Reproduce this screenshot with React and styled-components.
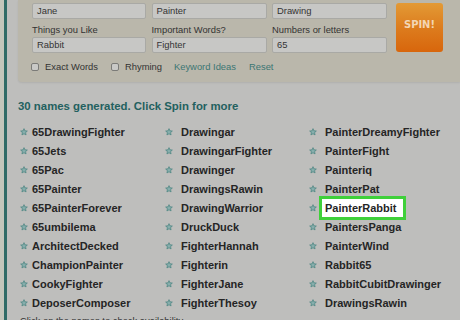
import React from 'react';
import styled, { createGlobalStyle } from 'styled-components';

const Global = createGlobalStyle`
  html, body { margin: 0; padding: 0; background: #bebebc; }
  body { font-family: "Liberation Sans", Arial, sans-serif; }
`;

const Frame = styled.div`
  width: 460px;
  height: 320px;
  overflow: hidden;
  display: flex;
  background: #bebebc;
`;

const Strip = styled.div`
  width: 4px;
  background: #c3c6bb;
`;

const Rule = styled.div`
  width: 3px;
  background: #2f6b66;
`;

const Main = styled.div`
  flex: 1;
  display: flex;
  flex-direction: column;
`;

const Panel = styled.div`
  margin-left: 11px;
  padding: 3px 0 10px 14px;
  background: #bab7ab;
  border-bottom-left-radius: 4px;
  box-shadow: 0 1px 2px rgba(0, 0, 0, 0.08);
`;

const FormRow = styled.div`
  display: flex;
`;

const FormGrid = styled.div`
  display: grid;
  grid-template-columns: 114px 115px 115px;
  grid-template-rows: 16px 18px 16px;
  column-gap: 5.5px;
`;

const Field = styled.div`
  box-sizing: border-box;
  background: #c7c7c5;
  border: 1px solid #a9a9a5;
  border-radius: 2px;
  padding-left: 4px;
  font-size: 9.4px;
  line-height: 14px;
  color: #343434;
`;

const Label = styled.div`
  align-self: end;
  margin-bottom: 2px;
  font-size: 9.4px;
  line-height: 11px;
  color: #333;
`;

const Spin = styled.div`
  margin-left: 9px;
  width: 47px;
  height: 49px;
  border-radius: 3px;
  background: linear-gradient(#e39a35, #dc7a1c 55%, #d8660c);
  display: flex;
  align-items: center;
  justify-content: center;
  color: #f3d6b4;
  font-family: "DejaVu Sans Condensed", "Liberation Sans Narrow", sans-serif;
  font-stretch: condensed;
  font-weight: bold;
  font-size: 11px;
  padding-bottom: 6px;
  box-sizing: border-box;
`;

const CheckRow = styled.div`
  display: flex;
  align-items: center;
  height: 11px;
  margin-top: 8px;
  margin-left: -1px;
  font-size: 9.4px;
  color: #333;
`;

const Box = styled.span`
  width: 8px;
  height: 8px;
  border: 1px solid #7b7b78;
  border-radius: 2px;
  background: #c9c9c7;
  box-sizing: border-box;
  margin-right: 6px;
`;

const Opt = styled.span`
  margin-right: ${p => p.$gap}px;
  color: ${p => (p.$link ? '#3a7673' : '#333')};
`;

const Heading = styled.div`
  margin: 17px 0 0 11px;
  font-size: 11.4px;
  line-height: 14px;
  font-weight: bold;
  color: #23615f;
`;

const List = styled.div`
  display: grid;
  grid-template-columns: 145px 144px 1fr;
  grid-auto-rows: 19px;
  margin: 9.5px 0 0 13px;
`;

const Item = styled.div`
  display: flex;
  align-items: center;
  font-size: 11px;
  font-weight: bold;
  color: #252525;
`;

const Star = styled.svg`
  width: 8px;
  height: 8px;
  flex: none;
  margin-right: ${p => (p.$tight ? 4 : 8)}px;
`;

const Name = styled.span`
  ${p =>
    p.$mark &&
    `
    background: #fff;
    border: 3px solid #3fd03a;
    padding: 1px 6px 0 3px;
    margin: -3px 0 -3px -6px;
    line-height: 17px;
  `}
`;

const Footer = styled.div`
  margin: 2px 0 0 13px;
  font-size: 9.4px;
  line-height: 11px;
  color: #333;
`;

const StarIcon = ({ tight }) => (
  <Star $tight={tight} viewBox="0 0 24 24">
    <path
      d="M12 2l2.9 6.6 7.1.6-5.4 4.7 1.6 7-6.2-3.7-6.2 3.7 1.6-7L2 9.2l7.1-.6z"
      fill="#86aeac"
      stroke="#4f8683"
      strokeWidth="2.4"
      strokeLinejoin="round"
    />
  </Star>
);

const columns = [
  ['65DrawingFighter', '65Jets', '65Pac', '65Painter', '65PainterForever', '65umbilema', 'ArchitectDecked', 'ChampionPainter', 'CookyFighter', 'DeposerComposer'],
  ['Drawingar', 'DrawingarFighter', 'Drawinger', 'DrawingsRawin', 'DrawingWarrior', 'DruckDuck', 'FighterHannah', 'Fighterin', 'FighterJane', 'FighterThesoy'],
  ['PainterDreamyFighter', 'PainterFight', 'Painteriq', 'PainterPat', 'PainterRabbit', 'PaintersPanga', 'PainterWind', 'Rabbit65', 'RabbitCubitDrawinger', 'DrawingsRawin'],
];

export default function App() {
  const rows = [];
  for (let r = 0; r < 10; r++) {
    columns.forEach((col, c) => {
      rows.push(
        <Item key={`${c}-${r}`}>
          <StarIcon tight={c === 0} />
          <Name $mark={col[r] === 'PainterRabbit'}>{col[r]}</Name>
        </Item>
      );
    });
  }

  return (
    <Frame>
      <Global />
      <Strip />
      <Rule />
      <Main>
        <Panel>
          <FormRow>
            <FormGrid>
              <Field>Jane</Field>
              <Field>Painter</Field>
              <Field>Drawing</Field>
              <Label>Things you Like</Label>
              <Label>Important Words?</Label>
              <Label>Numbers or letters</Label>
              <Field>Rabbit</Field>
              <Field>Fighter</Field>
              <Field>65</Field>
            </FormGrid>
            <Spin>SPIN!</Spin>
          </FormRow>
          <CheckRow>
            <Box />
            <Opt $gap={13}>Exact Words</Opt>
            <Box />
            <Opt $gap={12}>Rhyming</Opt>
            <Opt $gap={13} $link>Keyword Ideas</Opt>
            <Opt $gap={0} $link>Reset</Opt>
          </CheckRow>
        </Panel>
        <Heading>30 names generated. Click Spin for more</Heading>
        <List>{rows}</List>
        <Footer>Click on the names to check availability</Footer>
      </Main>
    </Frame>
  );
}
